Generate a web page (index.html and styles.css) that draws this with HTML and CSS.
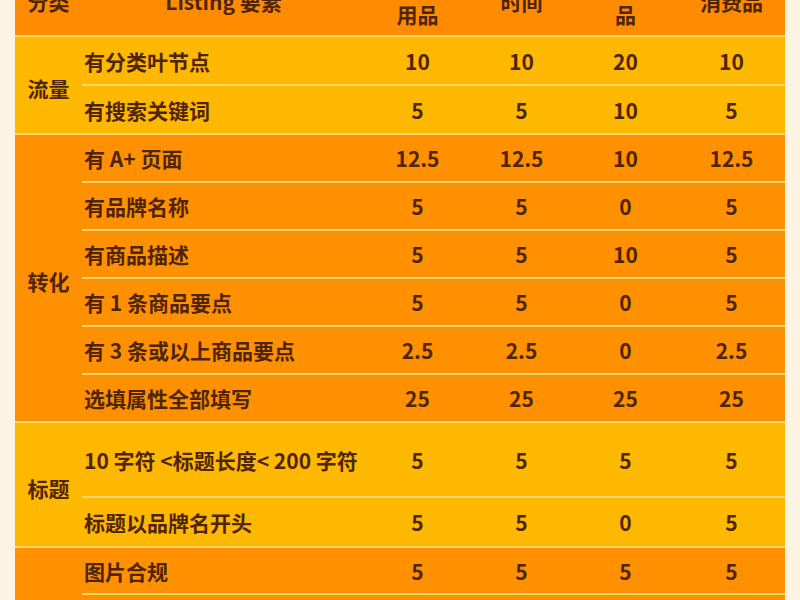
FILE: index.html
```html
<!DOCTYPE html>
<html lang="zh-CN">
<head>
<meta charset="utf-8">
<title>Listing 要素评分</title>
<link rel="stylesheet" href="styles.css">
</head>
<body>
<div class="page">
  <table class="score">
    <colgroup>
      <col class="c-cat"><col class="c-item"><col class="c-v1"><col class="c-v2"><col class="c-v3"><col class="c-v4">
    </colgroup>
    <thead>
      <tr class="head">
        <th>分类</th>
        <th>Listing 要素</th>
        <th>家居厨房<br>用品</th>
        <th>时间</th>
        <th>个护健康用<br>品</th>
        <th>消费品</th>
      </tr>
    </thead>
    <tbody class="sec yellow">
      <tr class="r49 first">
        <td class="cat" rowspan="2">流量</td>
        <td class="item">有分类叶节点</td><td>10</td><td>10</td><td>20</td><td>10</td>
      </tr>
      <tr class="r49">
        <td class="item">有搜索关键词</td><td>5</td><td>5</td><td>10</td><td>5</td>
      </tr>
    </tbody>
    <tbody class="sec orange">
      <tr class="r48 first">
        <td class="cat" rowspan="6">转化</td>
        <td class="item">有 A+ 页面</td><td>12.5</td><td>12.5</td><td>10</td><td>12.5</td>
      </tr>
      <tr class="r48"><td class="item">有品牌名称</td><td>5</td><td>5</td><td>0</td><td>5</td></tr>
      <tr class="r48"><td class="item">有商品描述</td><td>5</td><td>5</td><td>10</td><td>5</td></tr>
      <tr class="r48"><td class="item">有 1 条商品要点</td><td>5</td><td>5</td><td>0</td><td>5</td></tr>
      <tr class="r48"><td class="item">有 3 条或以上商品要点</td><td>2.5</td><td>2.5</td><td>0</td><td>2.5</td></tr>
      <tr class="r48"><td class="item">选填属性全部填写</td><td>25</td><td>25</td><td>25</td><td>25</td></tr>
    </tbody>
    <tbody class="sec yellow">
      <tr class="r75 first">
        <td class="cat" rowspan="2">标题</td>
        <td class="item">10 字符 &lt;标题长度&lt; 200 字符</td><td>5</td><td>5</td><td>5</td><td>5</td>
      </tr>
      <tr class="r50"><td class="item">标题以品牌名开头</td><td>5</td><td>5</td><td>0</td><td>5</td></tr>
    </tbody>
    <tbody class="sec orange">
      <tr class="r47 first">
        <td class="cat" rowspan="3">图片</td>
        <td class="item">图片合规</td><td>5</td><td>5</td><td>5</td><td>5</td>
      </tr>
      <tr class="r48"><td class="item">有 6 张及以上图片</td><td>5</td><td>5</td><td>5</td><td>5</td></tr>
      <tr class="r48"><td class="item">有视频</td><td>5</td><td>5</td><td>5</td><td>5</td></tr>
    </tbody>
  </table>
</div>
</body>
</html>
```

FILE: styles.css
```css
html, body {
  margin: 0;
  padding: 0;
  background: #fdf3e2;
}

.page {
  padding-left: 15px;
  margin-top: -33px;
  overflow: hidden;
}

.score {
  width: 767px;
  table-layout: fixed;
  border-collapse: separate;
  border-spacing: 0;
  font-family: "Noto Sans CJK SC", "Noto Sans", sans-serif;
  font-size: 21px;
  font-weight: 700;
  color: #4f250a;
}

.c-cat { width: 67px; }
.c-item { width: 283px; }
.c-v1 { width: 105px; }
.c-v2 { width: 103px; }
.c-v3 { width: 105px; }
.c-v4 { width: 107px; }

.score th,
.score td {
  padding: 0;
  text-align: center;
  vertical-align: middle;
  box-sizing: border-box;
  line-height: 26px;
  white-space: nowrap;
}

.head th {
  height: 68px;
  background: #ff8c00;
  font-weight: 700;
  line-height: 27px;
}

.sec td {
  border-top: 2px solid #ffd671;
}

.yellow td { background: #ffb800; }
.orange td { background: #ff9000; }

.score td.item {
  text-align: left;
  padding-left: 2px;
}

.score td.cat {
  padding-top: 6px;
}

.r47 td { height: 47px; }
.r48 td { height: 48px; }
.r49 td { height: 49px; }
.r50 td { height: 50px; }
.r75 td { height: 75px; }
.score td.cat { height: auto; }
```
